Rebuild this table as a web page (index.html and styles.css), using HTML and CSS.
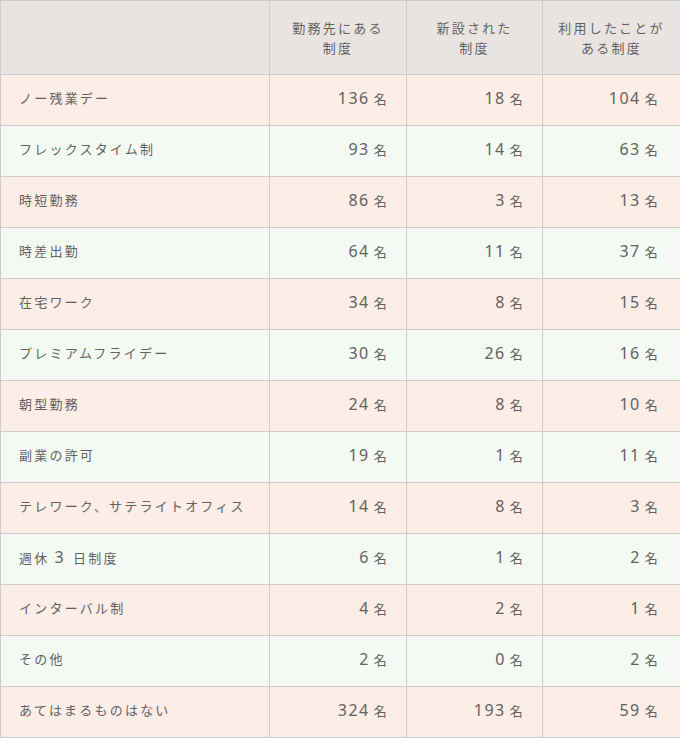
FILE: index.html
```html
<!DOCTYPE html>
<html lang="ja">
<head>
<meta charset="utf-8">
<link rel="stylesheet" href="styles.css">
</head>
<body>
<table class="tbl">
  <colgroup>
    <col class="c1"><col class="c2"><col class="c3"><col class="c4">
  </colgroup>
  <thead>
    <tr class="head">
      <th></th>
      <th>勤務先にある<br>制度</th>
      <th>新設された<br>制度</th>
      <th>利用したことが<br>ある制度</th>
    </tr>
  </thead>
  <tbody>
    <tr class="pink"><td class="name">ノー残業デー</td><td class="num"><span class="n">136</span>名</td><td class="num"><span class="n">18</span>名</td><td class="num last"><span class="n">104</span>名</td></tr>
    <tr class="green"><td class="name">フレックスタイム制</td><td class="num"><span class="n">93</span>名</td><td class="num"><span class="n">14</span>名</td><td class="num last"><span class="n">63</span>名</td></tr>
    <tr class="pink"><td class="name">時短勤務</td><td class="num"><span class="n">86</span>名</td><td class="num"><span class="n">3</span>名</td><td class="num last"><span class="n">13</span>名</td></tr>
    <tr class="green"><td class="name">時差出勤</td><td class="num"><span class="n">64</span>名</td><td class="num"><span class="n">11</span>名</td><td class="num last"><span class="n">37</span>名</td></tr>
    <tr class="pink"><td class="name">在宅ワーク</td><td class="num"><span class="n">34</span>名</td><td class="num"><span class="n">8</span>名</td><td class="num last"><span class="n">15</span>名</td></tr>
    <tr class="green"><td class="name">プレミアムフライデー</td><td class="num"><span class="n">30</span>名</td><td class="num"><span class="n">26</span>名</td><td class="num last"><span class="n">16</span>名</td></tr>
    <tr class="pink"><td class="name">朝型勤務</td><td class="num"><span class="n">24</span>名</td><td class="num"><span class="n">8</span>名</td><td class="num last"><span class="n">10</span>名</td></tr>
    <tr class="green"><td class="name">副業の許可</td><td class="num"><span class="n">19</span>名</td><td class="num"><span class="n">1</span>名</td><td class="num last"><span class="n">11</span>名</td></tr>
    <tr class="pink"><td class="name">テレワーク、サテライトオフィス</td><td class="num"><span class="n">14</span>名</td><td class="num"><span class="n">8</span>名</td><td class="num last"><span class="n">3</span>名</td></tr>
    <tr class="green"><td class="name">週休<span class="n">3</span>日制度</td><td class="num"><span class="n">6</span>名</td><td class="num"><span class="n">1</span>名</td><td class="num last"><span class="n">2</span>名</td></tr>
    <tr class="pink"><td class="name">インターバル制</td><td class="num"><span class="n">4</span>名</td><td class="num"><span class="n">2</span>名</td><td class="num last"><span class="n">1</span>名</td></tr>
    <tr class="green"><td class="name">その他</td><td class="num"><span class="n">2</span>名</td><td class="num"><span class="n">0</span>名</td><td class="num last"><span class="n">2</span>名</td></tr>
    <tr class="pink"><td class="name">あてはまるものはない</td><td class="num"><span class="n">324</span>名</td><td class="num"><span class="n">193</span>名</td><td class="num last"><span class="n">59</span>名</td></tr>
  </tbody>
</table>
</body>
</html>
```

FILE: styles.css
```css
html, body {
  margin: 0;
  padding: 0;
  background: #ffffff;
}

.tbl {
  border-collapse: collapse;
  width: 680px;
  table-layout: fixed;
  font-family: "Noto Sans CJK JP", sans-serif;
  font-size: 13px;
  letter-spacing: 0.17em;
  color: #626262;
}

.c1 { width: 269px; }
.c2 { width: 137px; }
.c3 { width: 136px; }
.c4 { width: 138px; }

.tbl th,
.tbl td {
  border: 1px solid #cccccc;
  padding: 0;
}

.tbl .head th {
  height: 73px;
  background: #e9e4e1;
  font-weight: normal;
  line-height: 20px;
  text-align: center;
  vertical-align: middle;
}

.tbl td {
  height: 46px;
  padding-bottom: 4px;
  line-height: 20px;
  vertical-align: middle;
}

.tbl .pink td { background: #fcede6; }
.tbl .green td { background: #f4faf3; }

.tbl .name {
  padding-left: 18px;
  text-align: left;
}

.tbl .num {
  text-align: right;
  padding-right: 17px;
}

.tbl .num.last {
  padding-right: 20px;
}

.n {
  font-family: "Noto Sans", sans-serif;
  font-size: 16px;
  letter-spacing: 1.5px;
  margin-right: 4px;
}

.name .n {
  margin-left: 5px;
  margin-right: 8px;
}
```
